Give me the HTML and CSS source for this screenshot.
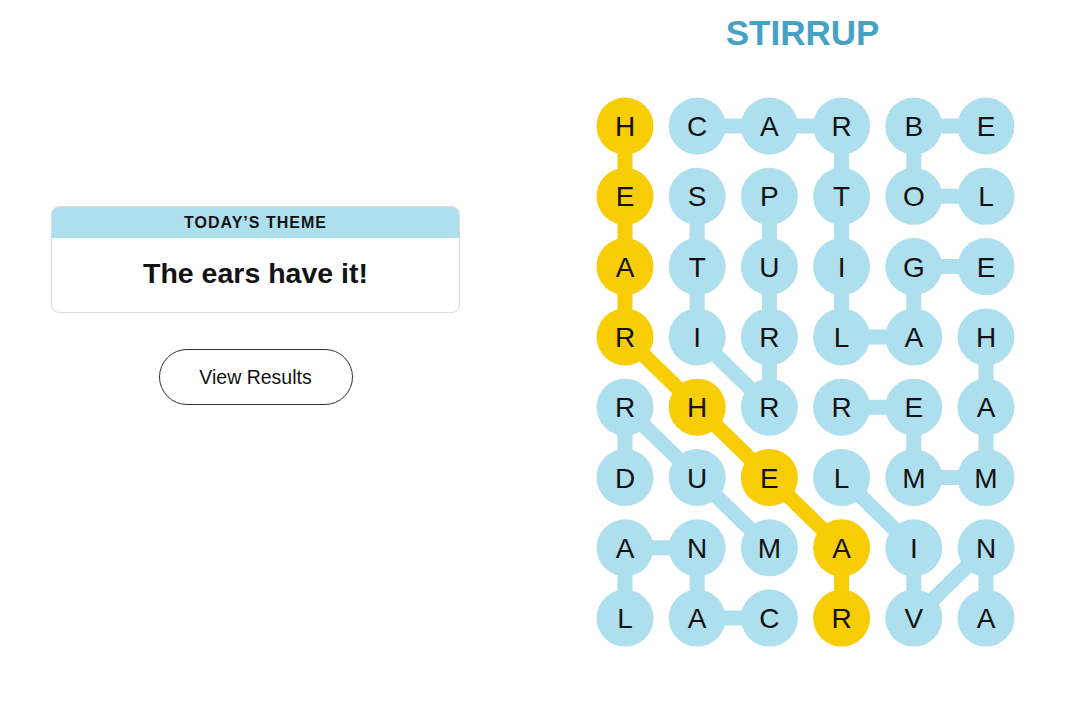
FILE: index.html
```html
<!DOCTYPE html>
<html>
<head>
<meta charset="utf-8">
<link rel="stylesheet" href="styles.css">
</head>
<body>
<div class="page">
  <div class="left">
    <div class="card">
      <div class="card-head">TODAY’S THEME</div>
      <div class="card-body">The ears have it!</div>
    </div>
    <button class="results">View Results</button>
  </div>
  <div class="right">
    <h1 class="title">STIRRUP</h1>
    <svg class="board" width="424" height="565" viewBox="0 0 424 565">
      <g class="link blue">
        <line x1="105.2" y1="36" x2="177.4" y2="36"/>
        <line x1="177.4" y1="36" x2="249.6" y2="36"/>
        <line x1="321.8" y1="36" x2="394" y2="36"/>
        <line x1="249.6" y1="36" x2="249.6" y2="106.3"/>
        <line x1="321.8" y1="36" x2="321.8" y2="106.3"/>
        <line x1="321.8" y1="106.3" x2="394" y2="106.3"/>
        <line x1="105.2" y1="106.3" x2="105.2" y2="176.6"/>
        <line x1="177.4" y1="106.3" x2="177.4" y2="176.6"/>
        <line x1="249.6" y1="106.3" x2="249.6" y2="176.6"/>
        <line x1="321.8" y1="176.6" x2="394" y2="176.6"/>
        <line x1="105.2" y1="176.6" x2="105.2" y2="246.9"/>
        <line x1="177.4" y1="176.6" x2="177.4" y2="246.9"/>
        <line x1="249.6" y1="176.6" x2="249.6" y2="246.9"/>
        <line x1="321.8" y1="176.6" x2="321.8" y2="246.9"/>
        <line x1="249.6" y1="246.9" x2="321.8" y2="246.9"/>
        <line x1="105.2" y1="246.9" x2="177.4" y2="317.2"/>
        <line x1="177.4" y1="246.9" x2="177.4" y2="317.2"/>
        <line x1="394" y1="246.9" x2="394" y2="317.2"/>
        <line x1="249.6" y1="317.2" x2="321.8" y2="317.2"/>
        <line x1="33" y1="317.2" x2="33" y2="387.5"/>
        <line x1="33" y1="317.2" x2="105.2" y2="387.5"/>
        <line x1="321.8" y1="317.2" x2="321.8" y2="387.5"/>
        <line x1="394" y1="317.2" x2="394" y2="387.5"/>
        <line x1="321.8" y1="387.5" x2="394" y2="387.5"/>
        <line x1="105.2" y1="387.5" x2="177.4" y2="457.8"/>
        <line x1="249.6" y1="387.5" x2="321.8" y2="457.8"/>
        <line x1="33" y1="457.8" x2="105.2" y2="457.8"/>
        <line x1="33" y1="457.8" x2="33" y2="528.1"/>
        <line x1="105.2" y1="457.8" x2="105.2" y2="528.1"/>
        <line x1="321.8" y1="457.8" x2="321.8" y2="528.1"/>
        <line x1="394" y1="457.8" x2="321.8" y2="528.1"/>
        <line x1="394" y1="457.8" x2="394" y2="528.1"/>
        <line x1="105.2" y1="528.1" x2="177.4" y2="528.1"/>
      </g>
      <g class="link gold">
        <line x1="33" y1="36" x2="33" y2="246.9"/>
        <line x1="33" y1="246.9" x2="105.2" y2="317.2"/>
        <line x1="105.2" y1="317.2" x2="177.4" y2="387.5"/>
        <line x1="177.4" y1="387.5" x2="249.6" y2="457.8"/>
        <line x1="249.6" y1="457.8" x2="249.6" y2="528.1"/>
      </g>
      <g class="cells">
        <circle class="gold" cx="33" cy="36" r="28.5"/>
        <circle cx="105.2" cy="36" r="28.5"/>
        <circle cx="177.4" cy="36" r="28.5"/>
        <circle cx="249.6" cy="36" r="28.5"/>
        <circle cx="321.8" cy="36" r="28.5"/>
        <circle cx="394" cy="36" r="28.5"/>

        <circle class="gold" cx="33" cy="106.3" r="28.5"/>
        <circle cx="105.2" cy="106.3" r="28.5"/>
        <circle cx="177.4" cy="106.3" r="28.5"/>
        <circle cx="249.6" cy="106.3" r="28.5"/>
        <circle cx="321.8" cy="106.3" r="28.5"/>
        <circle cx="394" cy="106.3" r="28.5"/>

        <circle class="gold" cx="33" cy="176.6" r="28.5"/>
        <circle cx="105.2" cy="176.6" r="28.5"/>
        <circle cx="177.4" cy="176.6" r="28.5"/>
        <circle cx="249.6" cy="176.6" r="28.5"/>
        <circle cx="321.8" cy="176.6" r="28.5"/>
        <circle cx="394" cy="176.6" r="28.5"/>

        <circle class="gold" cx="33" cy="246.9" r="28.5"/>
        <circle cx="105.2" cy="246.9" r="28.5"/>
        <circle cx="177.4" cy="246.9" r="28.5"/>
        <circle cx="249.6" cy="246.9" r="28.5"/>
        <circle cx="321.8" cy="246.9" r="28.5"/>
        <circle cx="394" cy="246.9" r="28.5"/>

        <circle cx="33" cy="317.2" r="28.5"/>
        <circle class="gold" cx="105.2" cy="317.2" r="28.5"/>
        <circle cx="177.4" cy="317.2" r="28.5"/>
        <circle cx="249.6" cy="317.2" r="28.5"/>
        <circle cx="321.8" cy="317.2" r="28.5"/>
        <circle cx="394" cy="317.2" r="28.5"/>

        <circle cx="33" cy="387.5" r="28.5"/>
        <circle cx="105.2" cy="387.5" r="28.5"/>
        <circle class="gold" cx="177.4" cy="387.5" r="28.5"/>
        <circle cx="249.6" cy="387.5" r="28.5"/>
        <circle cx="321.8" cy="387.5" r="28.5"/>
        <circle cx="394" cy="387.5" r="28.5"/>

        <circle cx="33" cy="457.8" r="28.5"/>
        <circle cx="105.2" cy="457.8" r="28.5"/>
        <circle cx="177.4" cy="457.8" r="28.5"/>
        <circle class="gold" cx="249.6" cy="457.8" r="28.5"/>
        <circle cx="321.8" cy="457.8" r="28.5"/>
        <circle cx="394" cy="457.8" r="28.5"/>

        <circle cx="33" cy="528.1" r="28.5"/>
        <circle cx="105.2" cy="528.1" r="28.5"/>
        <circle cx="177.4" cy="528.1" r="28.5"/>
        <circle class="gold" cx="249.6" cy="528.1" r="28.5"/>
        <circle cx="321.8" cy="528.1" r="28.5"/>
        <circle cx="394" cy="528.1" r="28.5"/>
      </g>
      <g class="letters">
        <text x="33" y="46">H</text><text x="105.2" y="46">C</text><text x="177.4" y="46">A</text><text x="249.6" y="46">R</text><text x="321.8" y="46">B</text><text x="394" y="46">E</text>
        <text x="33" y="116.3">E</text><text x="105.2" y="116.3">S</text><text x="177.4" y="116.3">P</text><text x="249.6" y="116.3">T</text><text x="321.8" y="116.3">O</text><text x="394" y="116.3">L</text>
        <text x="33" y="186.6">A</text><text x="105.2" y="186.6">T</text><text x="177.4" y="186.6">U</text><text x="249.6" y="186.6">I</text><text x="321.8" y="186.6">G</text><text x="394" y="186.6">E</text>
        <text x="33" y="256.9">R</text><text x="105.2" y="256.9">I</text><text x="177.4" y="256.9">R</text><text x="249.6" y="256.9">L</text><text x="321.8" y="256.9">A</text><text x="394" y="256.9">H</text>
        <text x="33" y="327.2">R</text><text x="105.2" y="327.2">H</text><text x="177.4" y="327.2">R</text><text x="249.6" y="327.2">R</text><text x="321.8" y="327.2">E</text><text x="394" y="327.2">A</text>
        <text x="33" y="397.5">D</text><text x="105.2" y="397.5">U</text><text x="177.4" y="397.5">E</text><text x="249.6" y="397.5">L</text><text x="321.8" y="397.5">M</text><text x="394" y="397.5">M</text>
        <text x="33" y="467.8">A</text><text x="105.2" y="467.8">N</text><text x="177.4" y="467.8">M</text><text x="249.6" y="467.8">A</text><text x="321.8" y="467.8">I</text><text x="394" y="467.8">N</text>
        <text x="33" y="538.1">L</text><text x="105.2" y="538.1">A</text><text x="177.4" y="538.1">C</text><text x="249.6" y="538.1">R</text><text x="321.8" y="538.1">V</text><text x="394" y="538.1">A</text>
      </g>
    </svg>
  </div>
</div>
</body>
</html>
```

FILE: styles.css
```css
html, body {
  margin: 0;
  padding: 0;
  background: #ffffff;
}

body {
  font-family: "Liberation Sans", Arial, sans-serif;
  color: #121212;
}

.page {
  display: flex;
  gap: 12px;
  width: 1085px;
  height: 710px;
}

.left {
  width: 511px;
  padding-top: 206px;
  display: flex;
  flex-direction: column;
  align-items: center;
  box-sizing: border-box;
}

.card {
  width: 409px;
  border: 1px solid #dcdcdc;
  border-radius: 8px;
  overflow: hidden;
  box-sizing: border-box;
}

.card-head {
  background: #aedfee;
  height: 31px;
  display: flex;
  align-items: center;
  justify-content: center;
  font-size: 16px;
  font-weight: 700;
  letter-spacing: 1px;
  color: #121212;
}

.card-body {
  height: 74px;
  display: flex;
  align-items: center;
  justify-content: center;
  font-size: 28.5px;
  font-weight: 700;
  padding-bottom: 4px;
  box-sizing: border-box;
  color: #121212;
}

.results {
  margin-top: 36px;
  width: 194px;
  height: 56px;
  border: 1px solid #333333;
  border-radius: 28px;
  background: #ffffff;
  font-family: "Liberation Sans", Arial, sans-serif;
  font-size: 19.5px;
  color: #121212;
  padding: 0;
}

.right {
  flex: 1;
  display: flex;
  flex-direction: column;
  align-items: center;
}

.title {
  margin: 12px 0 0 0;
  padding-right: 3px;
  font-size: 35px;
  line-height: 42px;
  font-weight: 700;
  color: #45a2c4;
}

.board {
  display: block;
  margin-top: 36px;
}

.link line {
  stroke-width: 15;
  stroke-linecap: butt;
}

.link.blue line {
  stroke: #aedfee;
}

.link.gold line {
  stroke: #f8cd05;
}

.cells circle {
  fill: #aedfee;
}

.cells circle.gold {
  fill: #f8cd05;
}

.letters text {
  font-family: "Liberation Sans", Arial, sans-serif;
  font-size: 28px;
  fill: #121212;
  text-anchor: middle;
}
```
